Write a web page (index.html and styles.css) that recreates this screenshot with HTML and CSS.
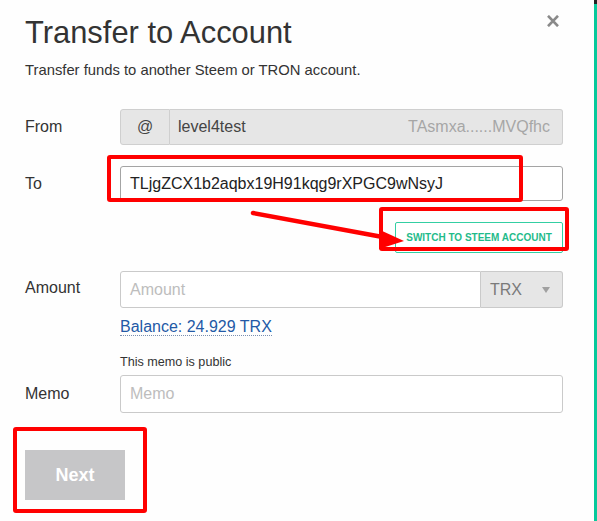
FILE: index.html
```html
<!DOCTYPE html>
<html>
<head>
<meta charset="utf-8">
<link rel="stylesheet" href="styles.css">
</head>
<body>
<div class="modal">
  <button class="close" aria-label="Close">
    <svg width="14" height="12" viewBox="0 0 14 12"><path d="M2 0.8 L12 11.2 M12 0.8 L2 11.2" stroke="#8a8a8a" stroke-width="2.6" fill="none"/></svg>
  </button>
  <h1 class="title">Transfer to Account</h1>
  <p class="sub">Transfer funds to another Steem or TRON account.</p>

  <div class="row row-from">
    <label class="lbl">From</label>
    <div class="group">
      <span class="addon">@</span>
      <div class="disabled-input">
        <span class="user">level4test</span>
        <span class="tron">TAsmxa......MVQfhc</span>
      </div>
    </div>
  </div>

  <div class="row row-to">
    <label class="lbl">To</label>
    <div class="field to-input">TLjgZCX1b2aqbx19H91kqg9rXPGC9wNsyJ</div>
  </div>

  <div class="switch-row">
    <button class="switch">SWITCH TO STEEM ACCOUNT</button>
  </div>

  <div class="row row-amount">
    <label class="lbl">Amount</label>
    <div class="group">
      <div class="field amount-input placeholder">Amount</div>
      <div class="select"><span>TRX</span><span class="caret"></span></div>
    </div>
  </div>

  <div class="indent balance-row"><span class="balance">Balance: 24.929 TRX</span></div>
  <div class="indent memo-note">This memo is public</div>

  <div class="row row-memo">
    <label class="lbl">Memo</label>
    <div class="field memo-input placeholder">Memo</div>
  </div>

  <button class="next">Next</button>

  <div class="mark mark-to"></div>
  <div class="mark mark-switch"></div>
  <div class="mark mark-next"></div>
  <svg class="arrow" width="597" height="521" viewBox="0 0 597 521">
    <line x1="253" y1="213" x2="388" y2="238" stroke="#ff0000" stroke-width="4.5" stroke-linecap="round"/>
    <polygon points="380,230 404,241 379,249" fill="#ff0000"/>
  </svg>
</div>
<div class="edge"></div>
</body>
</html>
```

FILE: styles.css
```css
* { box-sizing: border-box; }
html, body { margin: 0; padding: 0; }
body {
  width: 597px;
  height: 521px;
  overflow: hidden;
  display: flex;
  background: #fefefe;
  font-family: "Liberation Sans", Arial, sans-serif;
  color: #333;
}
.modal {
  position: relative;
  width: 594px;
  padding-left: 25px;
}
.edge {
  width: 3px;
  background: #06c99b;
  border-top: 4px solid #222;
}
.close {
  position: absolute;
  left: 546px;
  top: 15px;
  padding: 0;
  border: 0;
  background: none;
  width: 14px;
  height: 12px;
  display: block;
}
.close svg { display: block; }
.title {
  margin: 16px 0 0;
  font-size: 30.9px;
  line-height: 34px;
  font-weight: normal;
  color: #333;
}
.sub {
  margin: 11px 0 0;
  font-size: 14.8px;
  line-height: 18px;
  color: #333;
}
.row {
  display: flex;
  align-items: center;
  width: 538px;
}
.lbl {
  width: 95px;
  font-size: 16px;
  line-height: 18px;
  color: #333;
}
.group {
  display: flex;
  width: 443px;
}
.row-from { margin-top: 30px; }
.row-from .group { height: 36px; }
.addon {
  width: 50px;
  border: 1px solid #cfcfcf;
  border-radius: 3px 0 0 3px;
  background: #e6e6e6;
  display: flex;
  align-items: center;
  justify-content: center;
  font-size: 16px;
  color: #444;
}
.disabled-input {
  flex: 1;
  display: flex;
  align-items: center;
  justify-content: space-between;
  padding: 0 12px 0 8px;
  border: 1px solid #cfcfcf;
  border-left: 0;
  border-radius: 0 3px 3px 0;
  background: #e6e6e6;
  font-size: 16px;
}
.user { color: #444; }
.tron { color: #a6a6a6; }
.field {
  display: flex;
  align-items: center;
  font-size: 16px;
  padding-left: 9px;
  border: 1px solid #cacaca;
  border-radius: 3px;
  background: #fff;
}
.row-to { margin-top: 21px; }
.to-input {
  width: 443px;
  height: 35px;
  border-color: #a4a4a4;
  color: #222;
}
.switch-row {
  width: 538px;
  display: flex;
  justify-content: flex-end;
  margin-top: 21px;
}
.switch {
  width: 168px;
  height: 31px;
  padding: 0;
  background: #fff;
  border: 1px solid #33cfa3;
  border-radius: 2px;
  color: #1fbb8b;
  font-family: "Liberation Sans", Arial, sans-serif;
  font-size: 10px;
  font-weight: bold;
}
.row-amount { margin-top: 18px; }
.row-amount .group { height: 37px; }
.row-amount .lbl { margin-top: -3px; }
.amount-input {
  flex: 1;
  border-radius: 3px 0 0 3px;
}
.placeholder { color: #bdbdbd; }
.select {
  width: 82px;
  display: flex;
  align-items: center;
  justify-content: space-between;
  padding: 0 12px 0 9px;
  border: 1px solid #cacaca;
  border-left: 0;
  border-radius: 0 3px 3px 0;
  background: #e6e6e6;
  color: #7a7a7a;
  font-size: 16px;
}
.caret {
  width: 0;
  height: 0;
  border-left: 4px solid transparent;
  border-right: 4px solid transparent;
  border-top: 6px solid #a0a0a0;
}
.indent { margin-left: 95px; }
.balance-row {
  margin-top: 10px;
  height: 18px;
}
.balance {
  display: inline-block;
  font-size: 16px;
  line-height: 17px;
  color: #2359a6;
  border-bottom: 1px dotted #7a8fb0;
}
.memo-note {
  margin-top: 19px;
  font-size: 12.6px;
  line-height: 15px;
  color: #333;
}
.row-memo { margin-top: 5px; }
.memo-input {
  width: 443px;
  height: 38px;
}
.next {
  display: block;
  margin-top: 37px;
  width: 100px;
  height: 50px;
  border: 0;
  padding: 0;
  background: #c6c6c8;
  color: #fff;
  font-family: "Liberation Sans", Arial, sans-serif;
  font-size: 18px;
  font-weight: bold;
}
.mark {
  position: absolute;
  border: 4px solid #ff0000;
  border-radius: 3px;
}
.mark-to { left: 107px; top: 155px; width: 416px; height: 47px; }
.mark-switch { left: 379px; top: 207px; width: 190px; height: 44px; }
.mark-next { left: 13px; top: 427px; width: 134px; height: 86px; }
.arrow {
  position: absolute;
  left: 0;
  top: 0;
  pointer-events: none;
}
```
